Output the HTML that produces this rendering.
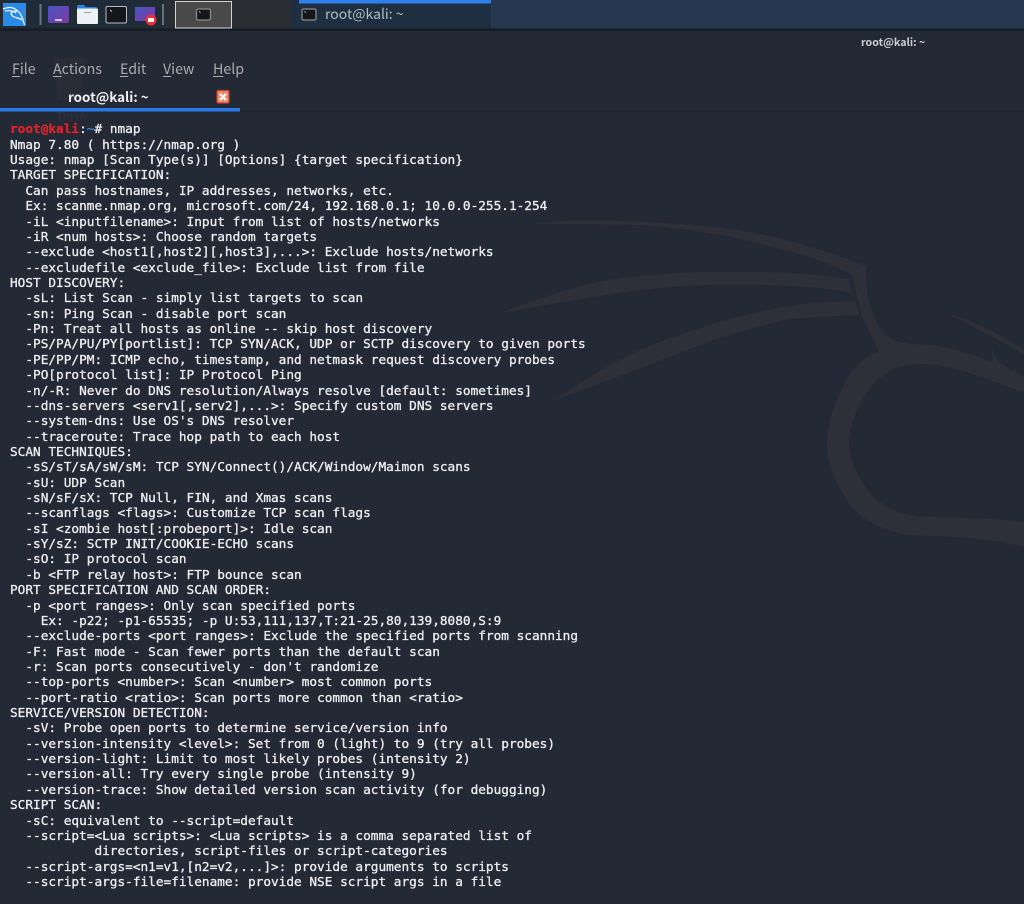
<!DOCTYPE html>
<html><head><meta charset="utf-8"><style>
html,body{margin:0;padding:0;background:#232935}
#r{position:relative;width:1024px;height:904px;overflow:hidden;background:#232935;font-family:"Noto Sans CJK JP","Liberation Sans",sans-serif}
#r>*{position:absolute}
pre{margin:0;left:10px;top:122.4px;font:12.75px/15.365px "DejaVu Sans Mono",monospace;font-weight:normal;color:#eceef0;letter-spacing:0;-webkit-text-stroke:.3px currentColor}
.m{top:59px;font-size:14.2px;color:#a9adb3;line-height:20px}
.m u{text-underline-offset:2px}
</style></head><body><div id="r">
<svg style="left:0;top:0" width="1024" height="904" viewBox="0 0 1024 904">
<g fill="#2d3039">
<path d="M532 224C560 220 590 220 619 221C660 222 695 225 723 228C760 233 790 240 810 247C835 254 850 260 866 266C866 280 866 293 870 305C875 322 884 340 904 343C915 345 925 344 938 346C955 349 975 355 992 362C1005 367 1015 372 1024 377L1024 393C1005 385 985 378 966 372C950 367 935 364 924 364C908 364 898 366 888 372C874 381 866 392 860 405C852 420 849 432 849 445C850 458 853 466 858 475C868 493 878 503 892 509C905 515 915 517 930 517C960 517 995 519 1024 522L1024 547C1005 542 985 539 966 538C945 536 925 536 907 535C890 532 876 526 862 517C850 508 842 493 834 477C829 465 827 455 827 443C828 425 832 412 838 397C844 383 850 372 858 364C865 358 872 354 879 351L862 317L852 275C838 268 825 262 810 257C785 250 755 242 723 235C690 230 660 226 636 225C600 224 565 224 532 224Z"/>
<path d="M501 313C530 302 555 293 584 285C610 279 632 276 654 275C680 272 700 272 723 272C750 272 770 272 792 273C815 275 830 276 848 279L852 293C835 290 815 287 792 286C765 285 735 284 706 285C675 286 648 289 619 293C580 299 540 306 501 313Z"/>
<path d="M555 400C575 386 597 372 619 360C642 348 665 340 688 332C712 324 735 317 758 312C780 307 805 303 827 302L856 301L859 315C835 316 815 317 792 319C770 323 745 330 723 337C700 345 678 353 654 363C620 376 588 388 555 400Z"/>
<path d="M945 312C960 317 972 322 983 327C1000 335 1012 342 1024 350L1024 355C1010 346 995 338 983 332C970 325 958 318 945 312Z"/>
<path d="M992 347C993 356 998 363 1014 372L992 364Z"/>
<path d="M1014 364C1014 368 1016 374 1024 380L1014 376Z"/>
</g>
<!-- faint desktop items -->
<g fill="#282d38"><path d="M54 58H85L81 100H58Z"/><rect x="55" y="160" width="32" height="38" rx="3"/></g>
<!-- panel -->
<defs>
<linearGradient id="d" x1="0" x2="1" y1="0" y2="1"><stop offset="0" stop-color="#4a55c4"/><stop offset="1" stop-color="#7d3a9e"/></linearGradient>
</defs>
<rect width="1024" height="28.5" fill="#1f2c38"/>
<rect x="165" width="126" height="28.5" fill="#2a2d32"/>
<rect x="291" width="200" height="28.5" fill="#1d2f40"/>
<rect x="491" width="533" height="28.5" fill="#263850"/>
<rect y="28.5" width="1024" height="2.5" fill="#171c25"/>
<rect x="299" width="192" height="3.5" fill="#2f80ed"/>
<!-- kali icon -->
<rect x="3" y="3" width="23" height="23" fill="#2a8be6"/>
<path d="M3 9C8 7 12 7 15 9C19 11 21 14 23 20L24.5 25M5 11C9 10 14 11 16 13" fill="none" stroke="#e8f2fb" stroke-width="1.3"/>
<path d="M17 11.5C12 10.5 10 13 12 15.5C14 18 19 17.5 22 20" fill="none" stroke="#e8f2fb" stroke-width="1.4"/>
<rect x="39.5" y="4" width="2" height="21" fill="#6a7480"/>
<!-- desktop icon -->
<rect x="48" y="6" width="21" height="17" rx="1.5" fill="url(#d)"/>
<rect x="55" y="19" width="7" height="2" fill="#c8c8dc"/>
<!-- folder -->
<path d="M77 9V6a1 1 0 0 1 1-1h6l2 2h10a1 1 0 0 1 1 1v2H77Z" fill="#2a7fe0"/>
<rect x="77" y="8.5" width="21" height="15.5" rx="1" fill="#eef1f3"/>
<rect x="84" y="12" width="7" height="1" fill="#9aa3aa"/>
<!-- terminal -->
<rect x="106" y="6.5" width="20.5" height="16.5" rx="1.5" fill="#15171a" stroke="#b9bcbf"/>
<path d="M110 10l2 1.5" stroke="#cfd2d5"/>
<!-- screen recorder -->
<rect x="135" y="7" width="20" height="14" fill="url(#d)"/>
<rect x="137" y="21" width="16" height="2" fill="#222b3a"/>
<circle cx="151" cy="20" r="5.5" fill="#ee2c36"/>
<rect x="148" y="18" width="6" height="4" fill="#fff"/>
<rect x="162" y="4" width="2" height="21" fill="#6a7480"/>
<!-- pager -->
<rect x="175.5" y="1.5" width="56" height="26.5" fill="#494949" stroke="#d2d2d2"/>
<rect x="196.5" y="9" width="14" height="11" rx="1.5" fill="#15171a" stroke="#8a8a8a" stroke-width="1.3"/>
<path d="M199 11.5l1.5 1" stroke="#cfd2d5" stroke-width=".8"/>
<!-- task icon -->
<rect x="302" y="9" width="14" height="11" rx="1.5" fill="#15171a" stroke="#8a8a8a" stroke-width="1.3"/>
<path d="M304.5 11.5l1.5 1" stroke="#cfd2d5" stroke-width=".8"/>
<!-- tab -->
<rect y="110.5" width="1024" height="1" fill="#1d222c"/>
<rect y="108" width="240" height="3.5" fill="#2b78ea"/>
<rect x="217" y="90.5" width="12" height="12.5" rx="1.5" fill="#e09468" stroke="#d83a3a" stroke-width="1.2"/>
<path d="M220 94l6 6M226 94l-6 6" stroke="#fff" stroke-width="2"/>
</svg>
<div style="left:325px;top:4px;font-size:14px;line-height:20px;color:#b4bcc4">root@kali: ~</div>
<div style="left:861px;top:35px;font-size:10.7px;line-height:16px;font-weight:bold;color:#c9ced6">root@kali: ~</div>
<div class="m" style="left:12px"><u>F</u>ile</div>
<div class="m" style="left:53px"><u>A</u>ctions</div>
<div class="m" style="left:120px"><u>E</u>dit</div>
<div class="m" style="left:163px"><u>V</u>iew</div>
<div class="m" style="left:213px"><u>H</u>elp</div>
<div style="left:68px;top:86px;font-size:13.4px;line-height:20px;font-weight:bold;color:#eef0f2">root@kali: ~</div>
<div style="left:56px;top:110px;font-size:12px;line-height:14px;color:#2d323d">Trash</div>
<pre><span style="color:#e0222a;font-weight:bold">root@kali</span>:<span style="color:#3f7fd6">~</span># nmap
Nmap 7.80 ( https://nmap.org )
Usage: nmap [Scan Type(s)] [Options] {target specification}
TARGET SPECIFICATION:
  Can pass hostnames, IP addresses, networks, etc.
  Ex: scanme.nmap.org, microsoft.com/24, 192.168.0.1; 10.0.0-255.1-254
  -iL &lt;inputfilename&gt;: Input from list of hosts/networks
  -iR &lt;num hosts&gt;: Choose random targets
  --exclude &lt;host1[,host2][,host3],...&gt;: Exclude hosts/networks
  --excludefile &lt;exclude_file&gt;: Exclude list from file
HOST DISCOVERY:
  -sL: List Scan - simply list targets to scan
  -sn: Ping Scan - disable port scan
  -Pn: Treat all hosts as online -- skip host discovery
  -PS/PA/PU/PY[portlist]: TCP SYN/ACK, UDP or SCTP discovery to given ports
  -PE/PP/PM: ICMP echo, timestamp, and netmask request discovery probes
  -PO[protocol list]: IP Protocol Ping
  -n/-R: Never do DNS resolution/Always resolve [default: sometimes]
  --dns-servers &lt;serv1[,serv2],...&gt;: Specify custom DNS servers
  --system-dns: Use OS's DNS resolver
  --traceroute: Trace hop path to each host
SCAN TECHNIQUES:
  -sS/sT/sA/sW/sM: TCP SYN/Connect()/ACK/Window/Maimon scans
  -sU: UDP Scan
  -sN/sF/sX: TCP Null, FIN, and Xmas scans
  --scanflags &lt;flags&gt;: Customize TCP scan flags
  -sI &lt;zombie host[:probeport]&gt;: Idle scan
  -sY/sZ: SCTP INIT/COOKIE-ECHO scans
  -sO: IP protocol scan
  -b &lt;FTP relay host&gt;: FTP bounce scan
PORT SPECIFICATION AND SCAN ORDER:
  -p &lt;port ranges&gt;: Only scan specified ports
    Ex: -p22; -p1-65535; -p U:53,111,137,T:21-25,80,139,8080,S:9
  --exclude-ports &lt;port ranges&gt;: Exclude the specified ports from scanning
  -F: Fast mode - Scan fewer ports than the default scan
  -r: Scan ports consecutively - don't randomize
  --top-ports &lt;number&gt;: Scan &lt;number&gt; most common ports
  --port-ratio &lt;ratio&gt;: Scan ports more common than &lt;ratio&gt;
SERVICE/VERSION DETECTION:
  -sV: Probe open ports to determine service/version info
  --version-intensity &lt;level&gt;: Set from 0 (light) to 9 (try all probes)
  --version-light: Limit to most likely probes (intensity 2)
  --version-all: Try every single probe (intensity 9)
  --version-trace: Show detailed version scan activity (for debugging)
SCRIPT SCAN:
  -sC: equivalent to --script=default
  --script=&lt;Lua scripts&gt;: &lt;Lua scripts&gt; is a comma separated list of
           directories, script-files or script-categories
  --script-args=&lt;n1=v1,[n2=v2,...]&gt;: provide arguments to scripts
  --script-args-file=filename: provide NSE script args in a file</pre>
</div></body></html>
